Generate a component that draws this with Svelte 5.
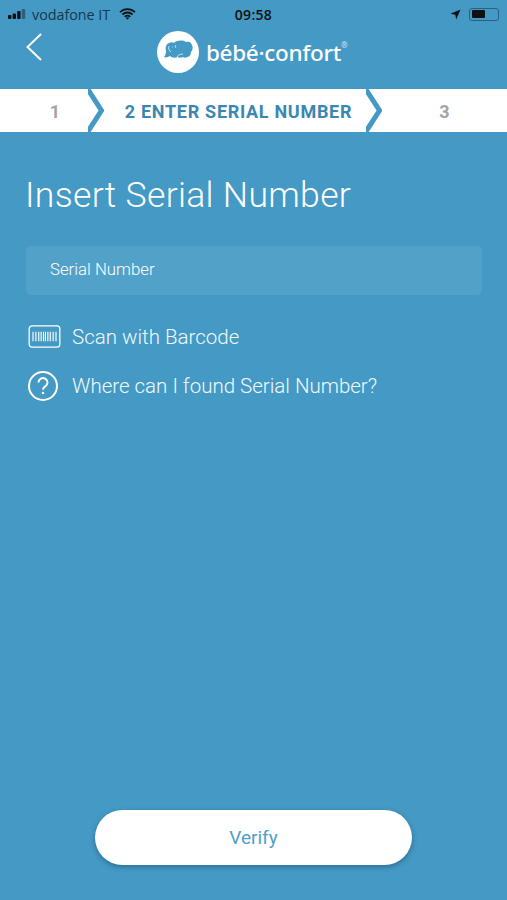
<script>
  const steps = [
    { label: '1', width: 88, pad: 22 },
    { label: '2 ENTER SERIAL NUMBER', width: 262, pad: 7, active: true },
    { label: '3', width: 125 }
  ]
</script>

<div class="screen">
  <div class="status">
    <div class="status-left">
      <svg class="signal" width="20" height="10" viewBox="0 0 20 10">
        <rect x="0" y="6" width="3.400" height="4" rx="1" fill="#111" />
        <rect x="4.600" y="4.500" width="3.400" height="5.500" rx="1" fill="#111" />
        <rect x="9.200" y="2" width="3.400" height="8" rx="1" fill="#111" />
        <rect x="13.800" y="0" width="3.400" height="10" rx="1" fill="#2c5f80" />
      </svg>
      <span>vodafone IT</span>
      <svg class="wifi" width="17" height="12" viewBox="0 0 17 12">
        <path d="M1 4.200a10.600 10.600 0 0 1 15 0M3.400 6.600a7.200 7.200 0 0 1 10.200 0M5.800 8.800a3.800 3.800 0 0 1 5.400 0" fill="none" stroke="#111" stroke-width="1.800" />
        <path d="M6.900 10l1.600 1.700L10.100 10a2.300 2.300 0 0 0-3.200 0z" fill="#111" />
      </svg>
    </div>
    <span class="clock">09:58</span>
    <div class="status-right">
      <svg width="11" height="11" viewBox="0 0 11 11"><path d="M10.500.5L.5 4.800l4.800.9.9 4.800z" fill="#111" /></svg>
      <div class="battery"><div class="charge"></div></div>
    </div>
  </div>

  <header>
    <svg class="back" width="18" height="30" viewBox="0 0 18 30">
      <path d="M16 2L2.500 15 16 28" fill="none" stroke="#fff" stroke-width="2" />
    </svg>
    <div class="logo">
      <svg width="42" height="42" viewBox="0 0 42 42">
        <circle cx="21" cy="21" r="21" fill="#fff" />
        <path d="M7 26c1-1 2-3 2-6-1-3 0-7 3-8 2-1 4-1 5 0 3-3 9-3 12-1 3-1 5 0 6 3 1 2 1 5-1 7 0 3-2 5-4 5-1 1-3 1-4 0-2 1-4 1-5 0-3 1-6 1-8-1-2 1-4 2-6 1z" fill="#4499c5" />
        <path d="M12 15c-1 2 0 5 2 6M19 14c-1 1-1 2 0 3M15 16h.8M20 26c1-2 3-3 6-3" fill="none" stroke="#fff" stroke-width=".7" />
      </svg>
      <span class="brand">bébé·confort<sup>®</sup></span>
    </div>
  </header>

  <nav class="stepper">
    {#each steps as step, i}
      <div class="step" class:active={step.active} style="width: {step.width}px; padding-left: {step.pad ?? 0}px">{step.label}</div>
      {#if i < steps.length - 1}
        <svg class="chevron" width="16" height="43" viewBox="0 0 16 43">
          <path d="M-1-1L13.500 21.500-1 44" fill="none" stroke="#4499c5" stroke-width="5" />
        </svg>
      {/if}
    {/each}
  </nav>

  <main>
    <h1>Insert Serial Number</h1>
    <div class="field">Serial Number</div>
    <div class="link">
      <svg class="barcode" width="33" height="23" viewBox="0 0 34 24">
        <rect x="1" y="1" width="32" height="22" rx="3" fill="none" stroke="#fff" stroke-width="1.300" />
        <path d="M5 7v10M8 7v10M11 7v10M13.500 7v10M16 7v10M18 7v10M20.500 7v10M23 7v10M26 7v10M29 7v10" stroke="#fff" stroke-width="1.200" />
      </svg>
      <span>Scan with Barcode</span>
    </div>
    <div class="link">
      <svg width="34" height="30" viewBox="0 0 34 30">
        <circle cx="17" cy="15" r="14" fill="none" stroke="#fff" stroke-width="2" />
        <path d="M12.500 11.500a4.500 4.500 0 1 1 6.800 3.900c-1.500.9-2.300 1.700-2.300 3.300" fill="none" stroke="#fff" stroke-width="1.900" />
        <circle cx="17" cy="22" r="1.300" fill="#fff" />
      </svg>
      <span>Where can I found Serial Number?</span>
    </div>
  </main>

  <button>Verify</button>
</div>

<style>
  :global(body) {
    margin: 0;
    background: #4499c5;
  }

  .screen {
    height: 900px;
    display: flex;
    flex-direction: column;
    background: #4499c5;
    color: #fff;
    font-family: Roboto, sans-serif;
    overflow: hidden;
  }

  .status {
    height: 28px;
    display: grid;
    grid-template-columns: 1fr auto 1fr;
    align-items: center;
    padding: 0 8px;
    color: #111;
    font-size: 14px;
    font-family: "Open Sans", sans-serif;
  }

  .status-left {
    display: flex;
    align-items: center;
    gap: 6px;
  }

  .status-left span {
    color: #17374c;
    font-size: 14.300px;
    margin-left: -2px;
  }

  .wifi {
    margin-left: 3px;
  }

  .clock {
    font-weight: 600;
    font-size: 14px;
    letter-spacing: 0.3px;
  }

  .status-right {
    display: flex;
    align-items: center;
    justify-content: flex-end;
    gap: 8px;
  }

  .battery {
    width: 30px;
    height: 13px;
    border: 1px solid #2c5f80;
    border-radius: 3px;
    padding: 1.500px;
    box-sizing: border-box;
  }

  .charge {
    width: 13px;
    height: 100%;
    background: #111;
    border-radius: 1px;
  }

  header {
    height: 61px;
    position: relative;
    display: flex;
    justify-content: center;
    align-items: center;
  }

  .back {
    position: absolute;
    left: 25px;
    top: 4px;
  }

  .logo {
    display: flex;
    align-items: center;
    gap: 7px;
    margin-left: -9px;
    margin-top: -13px;
  }

  .brand {
    font-family: "Noto Sans", sans-serif;
    font-weight: 500;
    font-size: 22.500px;
    letter-spacing: -0.3px;
    position: relative;
  }

  sup {
    font-size: 8px;
    position: absolute;
    top: 2px;
    opacity: 0.7;
  }

  .stepper {
    display: flex;
    height: 43px;
    background: #fff;
  }

  .step {
    display: flex;
    align-items: center;
    justify-content: center;
    box-sizing: border-box;
    padding-top: 2px;
    color: #a4a4a4;
    font-weight: 700;
    font-size: 18px;
    flex-shrink: 0;
  }

  .step.active {
    color: #3c86b2;
    letter-spacing: 0.7px;
  }

  .chevron {
    flex-shrink: 0;
  }

  main {
    padding: 0 25px 0 26px;
    flex: 1;
  }

  h1 {
    margin: 41px 0 29px -1px;
    font-size: 35.600px;
    font-weight: 300;
    line-height: 44px;
    letter-spacing: 0.3px;
  }

  .field {
    height: 49px;
    display: flex;
    align-items: center;
    box-sizing: border-box;
    padding: 0 0 3px 24px;
    margin-bottom: 17px;
    border-radius: 5px;
    background: rgba(255, 255, 255, 0.08);
    font-size: 16.800px;
    font-weight: 300;
  }

  .link {
    display: flex;
    align-items: center;
    gap: 12px;
    height: 49px;
    font-size: 20.500px;
    font-weight: 300;
    color: #f2fafd;
  }

  .barcode {
    margin-left: 2px;
    margin-right: -1px;
  }

  button {
    align-self: center;
    width: 317px;
    height: 55px;
    margin: 0 0 35px;
    border: none;
    border-radius: 28px;
    background: #fff;
    box-shadow: 0 2px 5px rgba(20, 70, 100, 0.5);
    color: #4e9fc9;
    font-family: Roboto, sans-serif;
    font-size: 19px;
  }
</style>
